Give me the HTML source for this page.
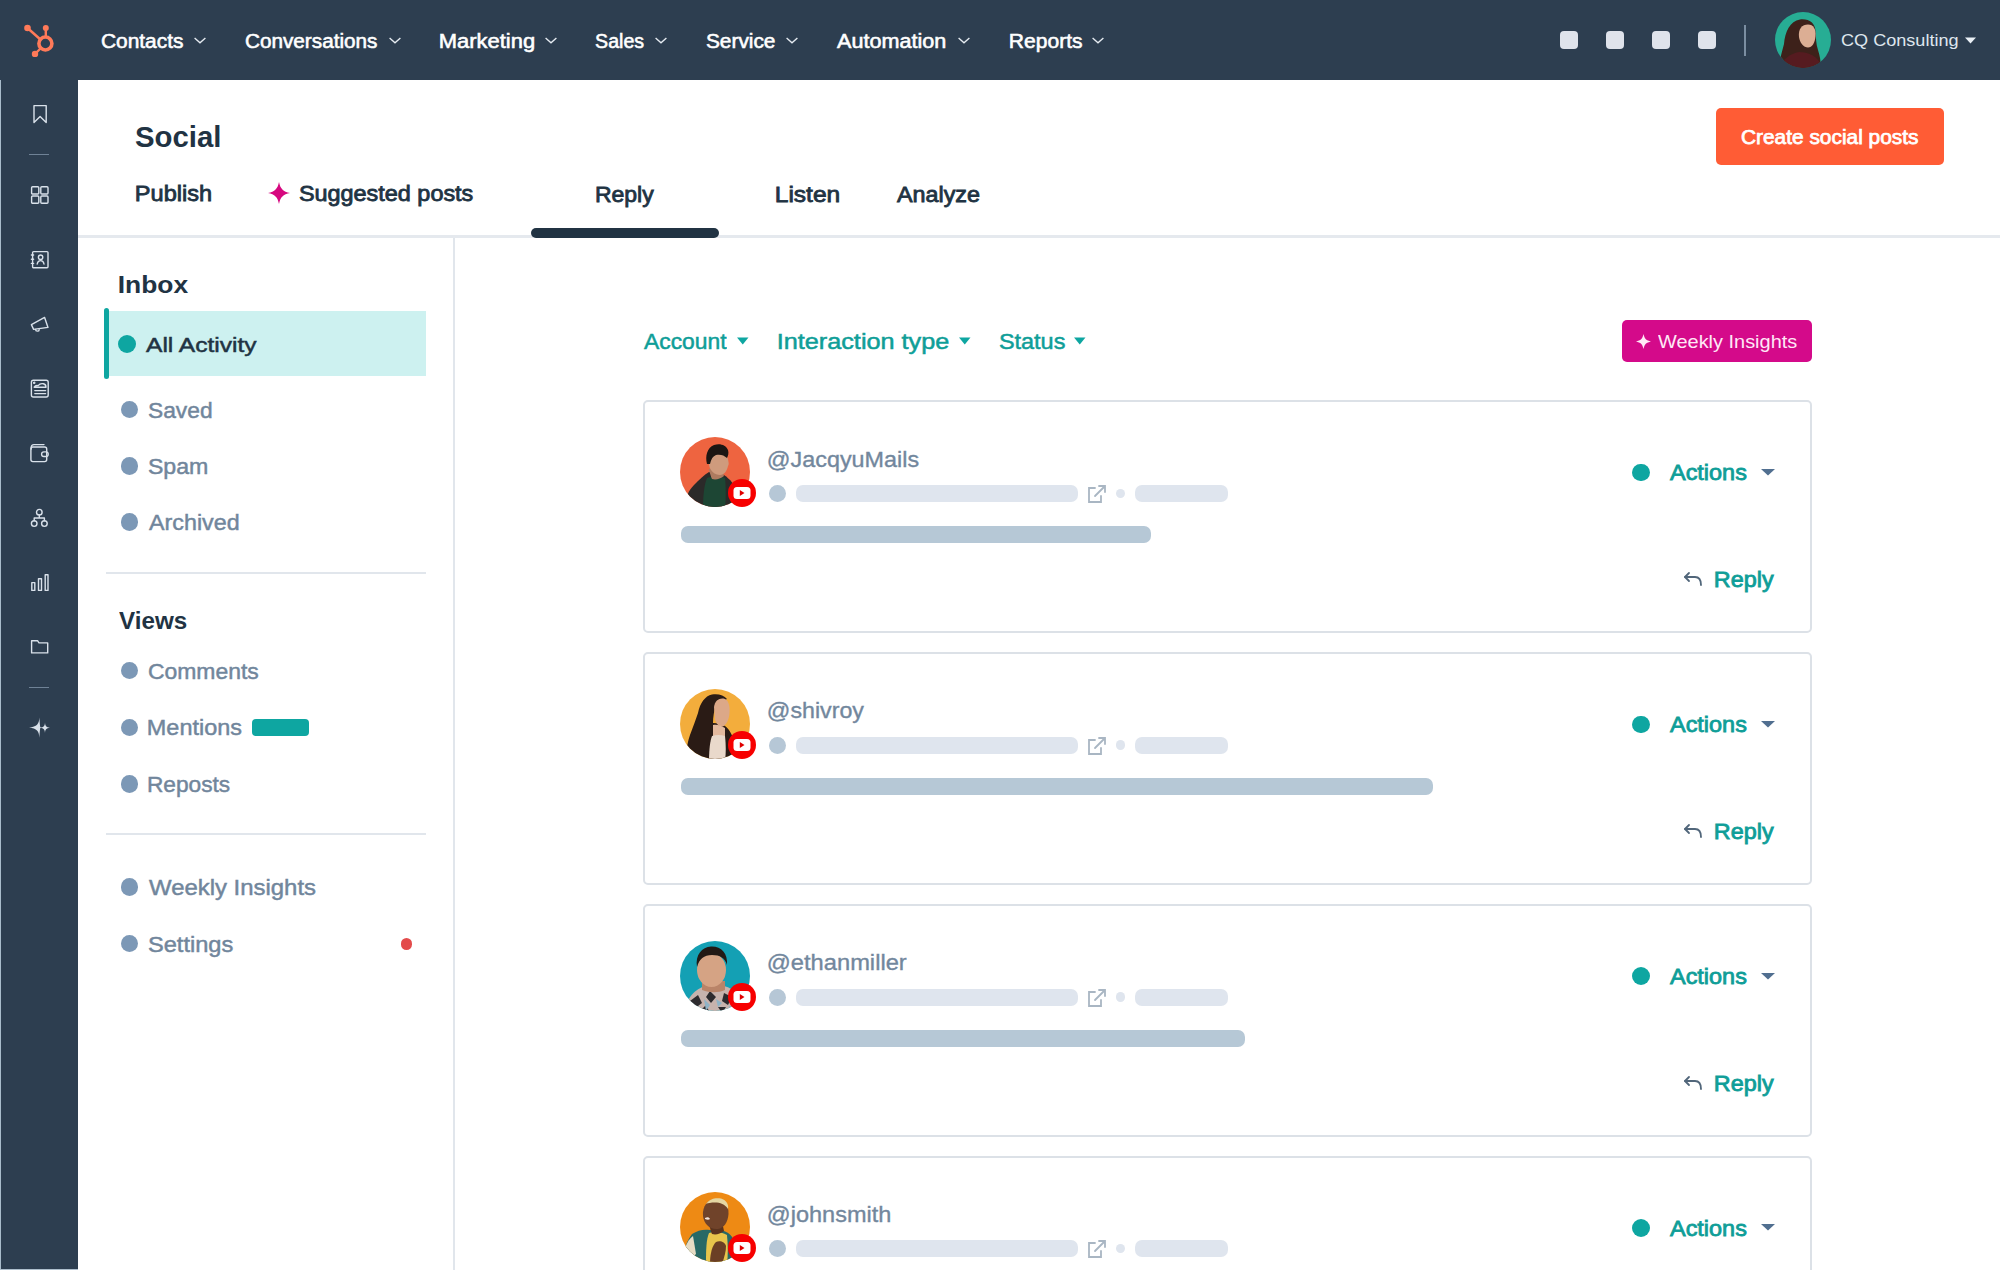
<!DOCTYPE html>
<html><head><meta charset="utf-8"><title>Social</title>
<style>
html,body{margin:0;padding:0;}
body{width:2000px;height:1270px;position:relative;overflow:hidden;background:#fff;font-family:"Liberation Sans",sans-serif;}
.t{position:absolute;line-height:1;white-space:nowrap;}
.r{position:absolute;}
</style></head><body>

<div class="r" style="left:0px;top:0px;width:2000px;height:80px;background:#2d3e50;border-radius:0px;"></div>
<div class="r" style="left:0px;top:80px;width:78px;height:1190px;background:#2d3e50;border-radius:0px;"></div>
<div class="r" style="left:0px;top:80px;width:1px;height:1190px;background:#a9bccb;border-radius:0px;"></div>
<div class="r" style="left:0px;top:1269px;width:78px;height:1px;background:#aebfcd;border-radius:0px;"></div>
<svg class="r" style="left:20px;top:18px;" width="40" height="42" viewBox="0 0 40 42">
<g fill="#ff7a59" stroke="#ff7a59">
<circle cx="7.5" cy="10" r="3.3" stroke="none"/>
<circle cx="25.8" cy="10" r="3" stroke="none"/>
<circle cx="15" cy="35.9" r="3.2" stroke="none"/>
<line x1="7.5" y1="10" x2="21" y2="22" stroke-width="2.4"/>
<line x1="25.8" y1="10" x2="25.8" y2="20" stroke-width="2.4"/>
<line x1="15" y1="35.9" x2="21" y2="30" stroke-width="2.4"/>
<circle cx="25.4" cy="25.5" r="6.5" fill="none" stroke-width="3.6"/>
</g></svg>
<div class="t" style="left:100.90px;top:32.24px;font-size:19.6px;font-weight:400;color:#ffffff;transform:scaleX(1.0671);transform-origin:1.0px 0;-webkit-text-stroke:0.55px #ffffff">Contacts</div>
<svg class="r" style="left:193.5px;top:35.6px;" width="12" height="9" viewBox="0 0 12 9"><polyline points="0.6,2 6,6.8 11.4,2" fill="none" stroke="#e6ecf2" stroke-width="1.35"/></svg>
<div class="t" style="left:245.20px;top:32.24px;font-size:19.6px;font-weight:400;color:#ffffff;transform:scaleX(1.0581);transform-origin:1.0px 0;-webkit-text-stroke:0.55px #ffffff">Conversations</div>
<svg class="r" style="left:389.3px;top:35.6px;" width="12" height="9" viewBox="0 0 12 9"><polyline points="0.6,2 6,6.8 11.4,2" fill="none" stroke="#e6ecf2" stroke-width="1.35"/></svg>
<div class="t" style="left:438.80px;top:32.24px;font-size:19.6px;font-weight:400;color:#ffffff;transform:scaleX(1.1205);transform-origin:2.0px 0;-webkit-text-stroke:0.55px #ffffff">Marketing</div>
<svg class="r" style="left:544.5px;top:35.6px;" width="12" height="9" viewBox="0 0 12 9"><polyline points="0.6,2 6,6.8 11.4,2" fill="none" stroke="#e6ecf2" stroke-width="1.35"/></svg>
<div class="t" style="left:595.10px;top:32.24px;font-size:19.6px;font-weight:400;color:#ffffff;-webkit-text-stroke:0.55px #ffffff">Sales</div>
<svg class="r" style="left:654.8px;top:35.6px;" width="12" height="9" viewBox="0 0 12 9"><polyline points="0.6,2 6,6.8 11.4,2" fill="none" stroke="#e6ecf2" stroke-width="1.35"/></svg>
<div class="t" style="left:705.90px;top:32.24px;font-size:19.6px;font-weight:400;color:#ffffff;transform:scaleX(1.0641);transform-origin:1.0px 0;-webkit-text-stroke:0.55px #ffffff">Service</div>
<svg class="r" style="left:785.8px;top:35.6px;" width="12" height="9" viewBox="0 0 12 9"><polyline points="0.6,2 6,6.8 11.4,2" fill="none" stroke="#e6ecf2" stroke-width="1.35"/></svg>
<div class="t" style="left:837.40px;top:32.24px;font-size:19.6px;font-weight:400;color:#ffffff;transform:scaleX(1.1020);transform-origin:0.0px 0;-webkit-text-stroke:0.55px #ffffff">Automation</div>
<svg class="r" style="left:958.4px;top:35.6px;" width="12" height="9" viewBox="0 0 12 9"><polyline points="0.6,2 6,6.8 11.4,2" fill="none" stroke="#e6ecf2" stroke-width="1.35"/></svg>
<div class="t" style="left:1008.60px;top:32.24px;font-size:19.6px;font-weight:400;color:#ffffff;transform:scaleX(1.0742);transform-origin:2.0px 0;-webkit-text-stroke:0.55px #ffffff">Reports</div>
<svg class="r" style="left:1092.3px;top:35.6px;" width="12" height="9" viewBox="0 0 12 9"><polyline points="0.6,2 6,6.8 11.4,2" fill="none" stroke="#e6ecf2" stroke-width="1.35"/></svg>
<div class="r" style="left:1560px;top:31px;width:18px;height:18px;background:#dfe3eb;border-radius:4px;"></div>
<div class="r" style="left:1606px;top:31px;width:18px;height:18px;background:#dfe3eb;border-radius:4px;"></div>
<div class="r" style="left:1652px;top:31px;width:18px;height:18px;background:#dfe3eb;border-radius:4px;"></div>
<div class="r" style="left:1698px;top:31px;width:18px;height:18px;background:#dfe3eb;border-radius:4px;"></div>
<div class="r" style="left:1744px;top:25px;width:1.6px;height:31px;background:#7b8ea1;border-radius:0px;"></div>
<svg class="r" style="left:1775px;top:12px;" width="56" height="56" viewBox="0 0 56 56">
<defs><clipPath id="cqc"><circle cx="28" cy="28" r="28"/></clipPath></defs>
<g clip-path="url(#cqc)">
<rect width="56" height="56" fill="#27ad94"/>
<path d="M5 58 C4 48 7 40 9 32 C10 20 15 9 25 7.5 C34 6.5 40 11 40.5 19 C41 26 41 32 43 38 C45 44 46 50 46 58 Z" fill="#3d211a"/>
<path d="M24 25 C23 17 27 12.5 33 12.5 C38.5 12.5 41 17 40.5 24 C40 31 37 35.5 33 35.5 C28.5 35.5 25 31 24 25 Z" fill="#dcae94"/>
<path d="M3 60 C6 48 14 42 24 40 C34 40 44 44 50 60 Z" fill="#561b20"/>
</g></svg>
<div class="t" style="left:1841.00px;top:31.51px;font-size:17.4px;font-weight:400;color:#dfe6ee;transform:scaleX(1.0405);transform-origin:1.0px 0;">CQ Consulting</div>
<svg class="r" style="left:1965px;top:37px;" width="12" height="7" viewBox="0 0 12 7"><polygon points="0,0.5 11,0.5 5.5,6.5" fill="#eaf0f6"/></svg>
<div class="t" style="left:135.00px;top:123.05px;font-size:29px;font-weight:700;color:#213343;transform:scaleX(1.0122);transform-origin:1.0px 0;">Social</div>
<div class="t" style="left:134.50px;top:183.17px;font-size:21.8px;font-weight:400;color:#213343;transform:scaleX(1.0809);transform-origin:2.0px 0;-webkit-text-stroke:0.8px #213343">Publish</div>
<svg class="r" style="left:268px;top:182px;" width="22" height="22" viewBox="0 0 22 22"><path d="M11 0 C12.3 6.8 15.2 9.7 22 11 C15.2 12.3 12.3 15.2 11 22 C9.7 15.2 6.8 12.3 0 11 C6.8 9.7 9.7 6.8 11 0 Z" fill="#d6087f"/></svg>
<div class="t" style="left:299.30px;top:183.17px;font-size:21.8px;font-weight:400;color:#213343;transform:scaleX(1.0739);transform-origin:1.0px 0;-webkit-text-stroke:0.8px #213343">Suggested posts</div>
<div class="t" style="left:595.00px;top:183.57px;font-size:21.8px;font-weight:400;color:#213343;transform:scaleX(1.0556);transform-origin:2.0px 0;-webkit-text-stroke:0.8px #213343">Reply</div>
<div class="t" style="left:774.70px;top:183.67px;font-size:21.8px;font-weight:400;color:#213343;transform:scaleX(1.1255);transform-origin:2.0px 0;-webkit-text-stroke:0.8px #213343">Listen</div>
<div class="t" style="left:897.10px;top:183.67px;font-size:21.8px;font-weight:400;color:#213343;transform:scaleX(1.0701);transform-origin:0.0px 0;-webkit-text-stroke:0.8px #213343">Analyze</div>
<div class="r" style="left:78px;top:235px;width:1922px;height:3px;background:#e5e9ee;border-radius:0px;"></div>
<div class="r" style="left:531px;top:228px;width:188px;height:9.5px;background:#213343;border-radius:5px;"></div>
<div class="r" style="left:1716px;top:108px;width:228px;height:57px;background:#ff5c35;border-radius:5px;"></div>
<div class="t" style="left:1741.00px;top:127.25px;font-size:20.3px;font-weight:400;color:#ffffff;transform:scaleX(1.0292);transform-origin:1.0px 0;-webkit-text-stroke:0.75px #ffffff">Create social posts</div>
<div class="r" style="left:453px;top:238px;width:2px;height:1032px;background:#e1e6ec;border-radius:0px;"></div>
<div class="t" style="left:118.00px;top:273.22px;font-size:23.8px;font-weight:700;color:#213343;transform:scaleX(1.1082);transform-origin:2.0px 0;">Inbox</div>
<div class="r" style="left:109px;top:311px;width:317px;height:65px;background:#cdf1f0;border-radius:0px;"></div>
<div class="r" style="left:104px;top:308px;width:5px;height:71px;background:#0ea6a1;border-radius:3px;"></div>
<div class="r" style="left:118px;top:334.5px;width:18px;height:18px;background:#0ea6a1;border-radius:9px;"></div>
<div class="t" style="left:146.00px;top:333.85px;font-size:21px;font-weight:400;color:#213343;transform:scaleX(1.1702);transform-origin:0.0px 0;-webkit-text-stroke:0.5px #213343">All Activity</div>
<div class="r" style="left:120.5px;top:400.75px;width:17.5px;height:17.5px;background:#7c98b6;border-radius:9px;"></div>
<div class="t" style="left:147.50px;top:399.64px;font-size:21.6px;font-weight:400;color:#71869c;transform:scaleX(1.0559);transform-origin:1.0px 0;-webkit-text-stroke:0.45px #71869c">Saved</div>
<div class="r" style="left:120.5px;top:457.05px;width:17.5px;height:17.5px;background:#7c98b6;border-radius:9px;"></div>
<div class="t" style="left:147.50px;top:455.94px;font-size:21.6px;font-weight:400;color:#71869c;transform:scaleX(1.0722);transform-origin:1.0px 0;-webkit-text-stroke:0.45px #71869c">Spam</div>
<div class="r" style="left:120.5px;top:513.45px;width:17.5px;height:17.5px;background:#7c98b6;border-radius:9px;"></div>
<div class="t" style="left:148.50px;top:512.34px;font-size:21.6px;font-weight:400;color:#71869c;transform:scaleX(1.0783);transform-origin:0.0px 0;-webkit-text-stroke:0.45px #71869c">Archived</div>
<div class="r" style="left:106px;top:572px;width:320px;height:2px;background:#e1e6ec;border-radius:0px;"></div>
<div class="t" style="left:118.90px;top:609.47px;font-size:23.8px;font-weight:700;color:#213343;transform:scaleX(1.0167);transform-origin:0.0px 0;">Views</div>
<div class="r" style="left:120.5px;top:661.85px;width:17.5px;height:17.5px;background:#7c98b6;border-radius:9px;"></div>
<div class="t" style="left:147.50px;top:660.74px;font-size:21.6px;font-weight:400;color:#71869c;transform:scaleX(1.0612);transform-origin:1.0px 0;-webkit-text-stroke:0.45px #71869c">Comments</div>
<div class="r" style="left:120.5px;top:718.55px;width:17.5px;height:17.5px;background:#7c98b6;border-radius:9px;"></div>
<div class="t" style="left:146.50px;top:717.44px;font-size:21.6px;font-weight:400;color:#71869c;transform:scaleX(1.0859);transform-origin:2.0px 0;-webkit-text-stroke:0.45px #71869c">Mentions</div>
<div class="r" style="left:252px;top:719px;width:56.5px;height:17px;background:#0ea6a1;border-radius:4px;"></div>
<div class="r" style="left:120.5px;top:775.25px;width:17.5px;height:17.5px;background:#7c98b6;border-radius:9px;"></div>
<div class="t" style="left:146.50px;top:774.14px;font-size:21.6px;font-weight:400;color:#71869c;transform:scaleX(1.0519);transform-origin:2.0px 0;-webkit-text-stroke:0.45px #71869c">Reposts</div>
<div class="r" style="left:106px;top:833px;width:320px;height:2px;background:#e1e6ec;border-radius:0px;"></div>
<div class="r" style="left:120.5px;top:878.05px;width:17.5px;height:17.5px;background:#7c98b6;border-radius:9px;"></div>
<div class="t" style="left:148.50px;top:876.94px;font-size:21.6px;font-weight:400;color:#71869c;transform:scaleX(1.1073);transform-origin:0.0px 0;-webkit-text-stroke:0.45px #71869c">Weekly Insights</div>
<div class="r" style="left:120.5px;top:934.85px;width:17.5px;height:17.5px;background:#7c98b6;border-radius:9px;"></div>
<div class="t" style="left:147.50px;top:933.74px;font-size:21.6px;font-weight:400;color:#71869c;transform:scaleX(1.0947);transform-origin:1.0px 0;-webkit-text-stroke:0.45px #71869c">Settings</div>
<div class="r" style="left:400.5px;top:938px;width:11.5px;height:11.5px;background:#e34b4b;border-radius:6px;"></div>
<svg class="r" style="left:28.5px;top:103px;" width="22" height="22" viewBox="0 0 22 22"><g fill="none" stroke="#d9e1ea" stroke-width="1.4" stroke-linejoin="round" stroke-linecap="round"><path d="M5 2.6 H17.2 V19.6 L11.1 13.6 L5 19.6 Z"/></g></svg>
<div class="r" style="left:29px;top:154px;width:20px;height:1.2px;background:#6f8296;border-radius:0px;"></div>
<svg class="r" style="left:28.5px;top:184px;" width="22" height="22" viewBox="0 0 22 22"><g fill="none" stroke="#d9e1ea" stroke-width="1.4" stroke-linejoin="round" stroke-linecap="round"><rect x="2.6" y="2.8" width="7.2" height="7.2" rx="1"/><rect x="11.8" y="2.8" width="7.2" height="7.2" rx="1"/><rect x="2.6" y="12" width="7.2" height="7.2" rx="1"/><rect x="11.8" y="12" width="7.2" height="7.2" rx="1"/></g></svg>
<svg class="r" style="left:29px;top:248px;" width="22" height="22" viewBox="0 0 22 22"><g fill="none" stroke="#d9e1ea" stroke-width="1.4" stroke-linejoin="round" stroke-linecap="round"><rect x="3.6" y="3.6" width="15.4" height="16.2" rx="1"/><circle cx="11.6" cy="9.2" r="2.2"/><path d="M8.2 16 C8.6 13.6 10 12.6 11.6 12.6 C13.2 12.6 14.6 13.6 15 16"/><path d="M2.4 7 H4.6 M2.4 11.2 H4.6 M2.4 15.4 H4.6"/></g></svg>
<svg class="r" style="left:28px;top:313px;" width="22" height="22" viewBox="0 0 22 22"><g fill="none" stroke="#d9e1ea" stroke-width="1.4" stroke-linejoin="round" stroke-linecap="round"><path d="M3.4 11.6 L16.6 4.4 L20 14.4 L5.6 16.4 Z"/><path d="M7.6 16.4 C7.6 18.6 11 18.8 11.2 16.6"/></g></svg>
<svg class="r" style="left:28.5px;top:378px;" width="22" height="22" viewBox="0 0 22 22"><g fill="none" stroke="#d9e1ea" stroke-width="1.4" stroke-linejoin="round" stroke-linecap="round"><rect x="2.4" y="2.2" width="16.8" height="16.8" rx="2"/><circle cx="5.2" cy="4.8" r="0.6"/><path d="M5.2 9.2 C6 7.8 7.6 7.2 9.2 7.6 C10.4 6 12.6 5.4 14.4 5.8 C16.2 6.2 17 7.6 17 9.2 Z"/><path d="M5.8 12.6 H16.6 M5.8 15.6 H16.6"/></g></svg>
<svg class="r" style="left:29px;top:442px;" width="22" height="22" viewBox="0 0 22 22"><g fill="none" stroke="#d9e1ea" stroke-width="1.4" stroke-linejoin="round" stroke-linecap="round"><path d="M2.2 7 V5.4 C2.2 3.6 3.2 2.6 5 2.6 H15"/><rect x="1.9" y="5" width="15.8" height="14.6" rx="2"/><rect x="12.6" y="9.9" width="6.6" height="4.6" rx="2.2"/></g></svg>
<svg class="r" style="left:28px;top:507px;" width="22" height="22" viewBox="0 0 22 22"><g fill="none" stroke="#d9e1ea" stroke-width="1.4" stroke-linejoin="round" stroke-linecap="round"><circle cx="11.3" cy="5.2" r="2.8"/><circle cx="6.2" cy="16.6" r="2.8"/><circle cx="16.4" cy="16.6" r="2.8"/><path d="M11.3 8 V11 M6.2 13.8 V11 H16.4 V13.8"/></g></svg>
<svg class="r" style="left:28.5px;top:571px;" width="22" height="22" viewBox="0 0 22 22"><g fill="none" stroke="#d9e1ea" stroke-width="1.4" stroke-linejoin="round" stroke-linecap="round"><rect x="2.8" y="11.6" width="3" height="7.8"/><rect x="9.5" y="7.7" width="3" height="11.7"/><rect x="16.2" y="3.7" width="2.8" height="15.7"/></g></svg>
<svg class="r" style="left:28.5px;top:636px;" width="22" height="22" viewBox="0 0 22 22"><g fill="none" stroke="#d9e1ea" stroke-width="1.4" stroke-linejoin="round" stroke-linecap="round"><path d="M2.6 4.7 H8.5 L10 6.9 H18.7 V16.9 H2.6 Z"/></g></svg>
<div class="r" style="left:29px;top:686.8px;width:20px;height:1.2px;background:#6f8296;border-radius:0px;"></div>
<svg class="r" style="left:28px;top:716px;" width="24" height="24" viewBox="0 0 24 24"><path d="M11.4 1.4 C11 8 9 10.5 1 11.5 C9 12.5 11 15 11.4 21.7 C11.8 15 12 13 12.5 11.5 C12 10 11.8 8 11.4 1.4 Z M17 6.4 C17.3 10 18 11 22 11.7 C18 12.4 17.3 13.4 17 17 C16.7 13.4 16 12.4 12 11.7 C16 11 16.7 10 17 6.4 Z" fill="#d9e1ea"/></svg>
<div class="t" style="left:644.20px;top:330.97px;font-size:21.8px;font-weight:400;color:#0f9e98;transform:scaleX(1.0481);transform-origin:0.0px 0;-webkit-text-stroke:0.5px #0f9e98">Account</div>
<svg class="r" style="left:737px;top:337px;" width="12" height="8" viewBox="0 0 12 8"><polygon points="0,0.5 11.5,0.5 5.75,7.5" fill="#0ea6a1"/></svg>
<div class="t" style="left:776.70px;top:330.97px;font-size:21.8px;font-weight:400;color:#0f9e98;transform:scaleX(1.1582);transform-origin:2.0px 0;-webkit-text-stroke:0.5px #0f9e98">Interaction type</div>
<svg class="r" style="left:959px;top:337px;" width="12" height="8" viewBox="0 0 12 8"><polygon points="0,0.5 11.5,0.5 5.75,7.5" fill="#0ea6a1"/></svg>
<div class="t" style="left:998.50px;top:330.97px;font-size:21.8px;font-weight:400;color:#0f9e98;transform:scaleX(1.0750);transform-origin:1.0px 0;-webkit-text-stroke:0.5px #0f9e98">Status</div>
<svg class="r" style="left:1074.3px;top:337px;" width="12" height="8" viewBox="0 0 12 8"><polygon points="0,0.5 11.5,0.5 5.75,7.5" fill="#0ea6a1"/></svg>
<div class="r" style="left:1622px;top:320px;width:190px;height:42px;background:#d40a8a;border-radius:5px;"></div>
<svg class="r" style="left:1635.5px;top:334px;" width="15" height="15" viewBox="0 0 15 15"><path d="M7.5 0 C8.4 4.6 10.4 6.6 15 7.5 C10.4 8.4 8.4 10.4 7.5 15 C6.6 10.4 4.6 8.4 0 7.5 C4.6 6.6 6.6 4.6 7.5 0 Z" fill="#ffeaf6"/></svg>
<div class="t" style="left:1658.00px;top:332.97px;font-size:18.5px;font-weight:400;color:#ffe8f6;transform:scaleX(1.0775);transform-origin:0.0px 0;">Weekly Insights</div>
<div class="r" style="left:643px;top:400.1px;width:1165px;height:229px;border:2px solid #dce1e7;border-radius:5px;"></div>
<svg class="r" style="left:680px;top:437.0px;" width="70" height="70" viewBox="0 0 70 70"><defs><clipPath id="av0"><circle cx="35" cy="35" r="35"/></clipPath></defs><g clip-path="url(#av0)"><rect width="70" height="70" fill="#ee6440"/>
<path d="M3 72 C5 62 8 54 14 48 C19 43 24 38 29 35 L44 38 C50 42 55 48 58 56 C60 62 62 68 62 72 Z" fill="#2b2a29"/>
<path d="M23 72 C23 60 24 48 27 41 C32 39 40 39 45 41 C46 50 46 62 45 72 Z" fill="#1d4634"/>
<path d="M28.5 32 C30 36 31 40 32 42 C36 43 40 42 44 39 C43 36 42 33 41 30 Z" fill="#ae7b60"/>
<path d="M29 24 C29 18 33 15 39 15 C45 15 48 19 48.5 25 C49 27 48.5 28 48 29 C47 34 44 38 40 38 C35 38 30 34 29 28 Z" fill="#cf9b7d"/>
<path d="M27 27 C25 19 27 11 34 8 C40 6 46 8 48 13 C49 16 48 19 47 21 C44 18 40 17 36 18 C33 19 31 22 30 27 Z" fill="#1c1613"/></g></svg>
<svg class="r" style="left:727.5px;top:479.0px;" width="28" height="28" viewBox="0 0 28 28"><circle cx="14" cy="14" r="14" fill="#f70000"/><rect x="5.5" y="8" width="17" height="12" rx="3.5" fill="#ffffff"/><polygon points="11.8,11 11.8,17 16.5,14" fill="#e00000"/></svg>
<div class="t" style="left:767.20px;top:448.67px;font-size:21.8px;font-weight:400;color:#72879d;transform:scaleX(1.0714);transform-origin:2.0px 0;-webkit-text-stroke:0.35px #72879d">@JacqyuMails</div>
<div class="r" style="left:769px;top:485.0px;width:17px;height:17px;background:#b6c7d6;border-radius:9px;"></div>
<div class="r" style="left:795.5px;top:485.0px;width:282px;height:17px;background:#dfe5ee;border-radius:7px;"></div>
<svg class="r" style="left:1086px;top:483.0px;" width="22" height="22" viewBox="0 0 22 22"><g fill="none" stroke="#a9b6c3" stroke-width="1.8" stroke-linecap="round"><path d="M9 5 H3 V19 H15 V13"/><path d="M9 13 L19 3 M13 3 H19 V9"/></g></svg>
<div class="r" style="left:1115.5px;top:488.5px;width:9.5px;height:9.5px;background:#dfe5ee;border-radius:5px;"></div>
<div class="r" style="left:1135px;top:485.0px;width:93px;height:17px;background:#dfe5ee;border-radius:7px;"></div>
<div class="r" style="left:681px;top:526.0px;width:470px;height:17px;background:#b6c8d6;border-radius:7px;"></div>
<div class="r" style="left:1632.3px;top:463.7px;width:17.6px;height:17.6px;background:#0ea6a1;border-radius:9px;"></div>
<div class="t" style="left:1669.60px;top:462.26px;font-size:22.4px;font-weight:400;color:#0f9e98;transform:scaleX(1.0466);transform-origin:0.0px 0;-webkit-text-stroke:0.8px #0f9e98">Actions</div>
<svg class="r" style="left:1760.5px;top:469.0px;" width="14" height="7" viewBox="0 0 14 7"><polygon points="0,0 14,0 7,6.5" fill="#516f90"/></svg>
<svg class="r" style="left:1683px;top:570.0px;" width="21" height="18" viewBox="0 0 21 18"><g fill="none" stroke="#51667a" stroke-width="1.8" stroke-linecap="round" stroke-linejoin="round"><path d="M6 3 L2 7 L6 11"/><path d="M2 7 H12 C16 7 18 10 18 15"/></g></svg>
<div class="t" style="left:1714.40px;top:569.46px;font-size:21.7px;font-weight:400;color:#0f9e98;transform:scaleX(1.0774);transform-origin:2.0px 0;-webkit-text-stroke:0.8px #0f9e98">Reply</div>
<div class="r" style="left:643px;top:651.9px;width:1165px;height:229px;border:2px solid #dce1e7;border-radius:5px;"></div>
<svg class="r" style="left:680px;top:688.8px;" width="70" height="70" viewBox="0 0 70 70"><defs><clipPath id="av1"><circle cx="35" cy="35" r="35"/></clipPath></defs><g clip-path="url(#av1)"><rect width="70" height="70" fill="#f3ad3c"/>
<path d="M6 72 C6 60 8 52 10 46 C13 38 16 30 18 24 C20 14 25 7 32 5.5 C38 4.5 44 6 47 10 L36 15 C34 22 33 28 33 34 C38 34 42 35 45 37 C50 41 53 47 54 54 C55 60 55 66 52 72 Z" fill="#2a1b15"/>
<path d="M34 18 C35 11 40 8.5 45 10 C49 12 50 18 49.5 24 C49 30 47 35 43 37.5 C39 38 36 35 35 30 Z" fill="#dca888"/>
<path d="M33 36 C36 35 41 36 45 39 L45 50 L33 50 Z" fill="#e3b99e"/>
<path d="M29 72 C29 62 30 52 32 47 C36 45.5 41 45.5 45 47 C46 56 46 64 45 72 Z" fill="#e9d9cb"/></g></svg>
<svg class="r" style="left:727.5px;top:730.8px;" width="28" height="28" viewBox="0 0 28 28"><circle cx="14" cy="14" r="14" fill="#f70000"/><rect x="5.5" y="8" width="17" height="12" rx="3.5" fill="#ffffff"/><polygon points="11.8,11 11.8,17 16.5,14" fill="#e00000"/></svg>
<div class="t" style="left:767.20px;top:700.47px;font-size:21.8px;font-weight:400;color:#72879d;transform:scaleX(1.0652);transform-origin:2.0px 0;-webkit-text-stroke:0.35px #72879d">@shivroy</div>
<div class="r" style="left:769px;top:736.8px;width:17px;height:17px;background:#b6c7d6;border-radius:9px;"></div>
<div class="r" style="left:795.5px;top:736.8px;width:282px;height:17px;background:#dfe5ee;border-radius:7px;"></div>
<svg class="r" style="left:1086px;top:734.8px;" width="22" height="22" viewBox="0 0 22 22"><g fill="none" stroke="#a9b6c3" stroke-width="1.8" stroke-linecap="round"><path d="M9 5 H3 V19 H15 V13"/><path d="M9 13 L19 3 M13 3 H19 V9"/></g></svg>
<div class="r" style="left:1115.5px;top:740.3px;width:9.5px;height:9.5px;background:#dfe5ee;border-radius:5px;"></div>
<div class="r" style="left:1135px;top:736.8px;width:93px;height:17px;background:#dfe5ee;border-radius:7px;"></div>
<div class="r" style="left:681px;top:777.8px;width:752px;height:17px;background:#b6c8d6;border-radius:7px;"></div>
<div class="r" style="left:1632.3px;top:715.5px;width:17.6px;height:17.6px;background:#0ea6a1;border-radius:9px;"></div>
<div class="t" style="left:1669.60px;top:714.06px;font-size:22.4px;font-weight:400;color:#0f9e98;transform:scaleX(1.0466);transform-origin:0.0px 0;-webkit-text-stroke:0.8px #0f9e98">Actions</div>
<svg class="r" style="left:1760.5px;top:720.8px;" width="14" height="7" viewBox="0 0 14 7"><polygon points="0,0 14,0 7,6.5" fill="#516f90"/></svg>
<svg class="r" style="left:1683px;top:821.8px;" width="21" height="18" viewBox="0 0 21 18"><g fill="none" stroke="#51667a" stroke-width="1.8" stroke-linecap="round" stroke-linejoin="round"><path d="M6 3 L2 7 L6 11"/><path d="M2 7 H12 C16 7 18 10 18 15"/></g></svg>
<div class="t" style="left:1714.40px;top:821.25px;font-size:21.7px;font-weight:400;color:#0f9e98;transform:scaleX(1.0774);transform-origin:2.0px 0;-webkit-text-stroke:0.8px #0f9e98">Reply</div>
<div class="r" style="left:643px;top:903.7px;width:1165px;height:229px;border:2px solid #dce1e7;border-radius:5px;"></div>
<svg class="r" style="left:680px;top:940.6px;" width="70" height="70" viewBox="0 0 70 70"><defs><clipPath id="av2"><circle cx="35" cy="35" r="35"/></clipPath></defs><g clip-path="url(#av2)"><rect width="70" height="70" fill="#14a0b4"/>
<path d="M4 72 C6 58 14 48 26 45 C32 44 38 44 44 45 C56 48 62 58 64 72 Z" fill="#c7b3ad"/>
<path d="M10 60 L18 54 L22 62 L14 68 Z M30 50 L36 56 L31 62 L26 56 Z M44 52 L52 56 L48 64 L42 60 Z M20 70 L26 64 L30 72 Z M38 66 L46 66 L42 72 Z" fill="#2d2b2e"/>
<path d="M24 58 L30 64 L26 70 Z M48 66 L56 62 L58 70 Z M36 58 L42 62 L38 66 Z" fill="#8fb3c6"/>
<path d="M22 40 H45 V49 C38 52 30 52 22 49 Z" fill="#b98468"/>
<ellipse cx="31.5" cy="29" rx="14.5" ry="17" fill="#d5a384"/>
<path d="M17 26 C15 14 22 6 31 5.5 C41 5 48 12 47 24 C45 17 40 14 32 14 C24 14 19 18 17 26 Z" fill="#221915"/></g></svg>
<svg class="r" style="left:727.5px;top:982.6px;" width="28" height="28" viewBox="0 0 28 28"><circle cx="14" cy="14" r="14" fill="#f70000"/><rect x="5.5" y="8" width="17" height="12" rx="3.5" fill="#ffffff"/><polygon points="11.8,11 11.8,17 16.5,14" fill="#e00000"/></svg>
<div class="t" style="left:767.20px;top:952.27px;font-size:21.8px;font-weight:400;color:#72879d;transform:scaleX(1.0866);transform-origin:2.0px 0;-webkit-text-stroke:0.35px #72879d">@ethanmiller</div>
<div class="r" style="left:769px;top:988.6px;width:17px;height:17px;background:#b6c7d6;border-radius:9px;"></div>
<div class="r" style="left:795.5px;top:988.6px;width:282px;height:17px;background:#dfe5ee;border-radius:7px;"></div>
<svg class="r" style="left:1086px;top:986.6px;" width="22" height="22" viewBox="0 0 22 22"><g fill="none" stroke="#a9b6c3" stroke-width="1.8" stroke-linecap="round"><path d="M9 5 H3 V19 H15 V13"/><path d="M9 13 L19 3 M13 3 H19 V9"/></g></svg>
<div class="r" style="left:1115.5px;top:992.1px;width:9.5px;height:9.5px;background:#dfe5ee;border-radius:5px;"></div>
<div class="r" style="left:1135px;top:988.6px;width:93px;height:17px;background:#dfe5ee;border-radius:7px;"></div>
<div class="r" style="left:681px;top:1029.6px;width:564px;height:17px;background:#b6c8d6;border-radius:7px;"></div>
<div class="r" style="left:1632.3px;top:967.3px;width:17.6px;height:17.6px;background:#0ea6a1;border-radius:9px;"></div>
<div class="t" style="left:1669.60px;top:965.86px;font-size:22.4px;font-weight:400;color:#0f9e98;transform:scaleX(1.0466);transform-origin:0.0px 0;-webkit-text-stroke:0.8px #0f9e98">Actions</div>
<svg class="r" style="left:1760.5px;top:972.6px;" width="14" height="7" viewBox="0 0 14 7"><polygon points="0,0 14,0 7,6.5" fill="#516f90"/></svg>
<svg class="r" style="left:1683px;top:1073.6px;" width="21" height="18" viewBox="0 0 21 18"><g fill="none" stroke="#51667a" stroke-width="1.8" stroke-linecap="round" stroke-linejoin="round"><path d="M6 3 L2 7 L6 11"/><path d="M2 7 H12 C16 7 18 10 18 15"/></g></svg>
<div class="t" style="left:1714.40px;top:1073.06px;font-size:21.7px;font-weight:400;color:#0f9e98;transform:scaleX(1.0774);transform-origin:2.0px 0;-webkit-text-stroke:0.8px #0f9e98">Reply</div>
<div class="r" style="left:643px;top:1155.5px;width:1165px;height:229px;border:2px solid #dce1e7;border-radius:5px;"></div>
<svg class="r" style="left:680px;top:1192.4px;" width="70" height="70" viewBox="0 0 70 70"><defs><clipPath id="av3"><circle cx="35" cy="35" r="35"/></clipPath></defs><g clip-path="url(#av3)"><rect width="70" height="70" fill="#ee8a14"/>
<path d="M2 72 C3 60 6 50 12 42 C18 38 24 37 30 38 L44 39 C50 41 54 46 56 54 L58 72 Z" fill="#276966"/>
<path d="M5 56 C7 50 10 46 13 44 L16 62 C12 66 8 68 5 68 Z" fill="#e7dcc4"/>
<path d="M26 72 C26 60 26 48 29 41 C35 39 42 40 47 43 C48 54 48 64 47 72 Z" fill="#e8c54b"/>
<path d="M30 72 C30 62 32 54 36 50 C40 48 45 50 46 54 C46 60 44 66 42 72 Z" fill="#6b3f25"/>
<path d="M28.5 30 C30 36 31 40 32 42 C36 43 40 42 44 39 C43 34 42 30 41 28 Z" fill="#5a341f"/>
<path d="M23 24 C22 14 28 7 36 7 C44 7 49 13 48.5 22 C48 30 44 36 38 37 C30 38 24 32 23 24 Z" fill="#70432a"/>
<path d="M25 26 C27 25 29 25 30 27 C29 28 27 28 25 27 Z" fill="#f1e3da"/>
<path d="M26 12 C29 7 35 5.5 41 6.5 C46 8 49 12 48 17 C45 12 40 10.5 35 10.5 C31 10.5 28 11 26 12 Z" fill="#e5d6a2"/></g></svg>
<svg class="r" style="left:727.5px;top:1234.4px;" width="28" height="28" viewBox="0 0 28 28"><circle cx="14" cy="14" r="14" fill="#f70000"/><rect x="5.5" y="8" width="17" height="12" rx="3.5" fill="#ffffff"/><polygon points="11.8,11 11.8,17 16.5,14" fill="#e00000"/></svg>
<div class="t" style="left:767.20px;top:1204.07px;font-size:21.8px;font-weight:400;color:#72879d;transform:scaleX(1.0786);transform-origin:2.0px 0;-webkit-text-stroke:0.35px #72879d">@johnsmith</div>
<div class="r" style="left:769px;top:1240.4px;width:17px;height:17px;background:#b6c7d6;border-radius:9px;"></div>
<div class="r" style="left:795.5px;top:1240.4px;width:282px;height:17px;background:#dfe5ee;border-radius:7px;"></div>
<svg class="r" style="left:1086px;top:1238.4px;" width="22" height="22" viewBox="0 0 22 22"><g fill="none" stroke="#a9b6c3" stroke-width="1.8" stroke-linecap="round"><path d="M9 5 H3 V19 H15 V13"/><path d="M9 13 L19 3 M13 3 H19 V9"/></g></svg>
<div class="r" style="left:1115.5px;top:1243.9px;width:9.5px;height:9.5px;background:#dfe5ee;border-radius:5px;"></div>
<div class="r" style="left:1135px;top:1240.4px;width:93px;height:17px;background:#dfe5ee;border-radius:7px;"></div>
<div class="r" style="left:1632.3px;top:1219.1px;width:17.6px;height:17.6px;background:#0ea6a1;border-radius:9px;"></div>
<div class="t" style="left:1669.60px;top:1217.66px;font-size:22.4px;font-weight:400;color:#0f9e98;transform:scaleX(1.0466);transform-origin:0.0px 0;-webkit-text-stroke:0.8px #0f9e98">Actions</div>
<svg class="r" style="left:1760.5px;top:1224.4px;" width="14" height="7" viewBox="0 0 14 7"><polygon points="0,0 14,0 7,6.5" fill="#516f90"/></svg>
</body></html>
